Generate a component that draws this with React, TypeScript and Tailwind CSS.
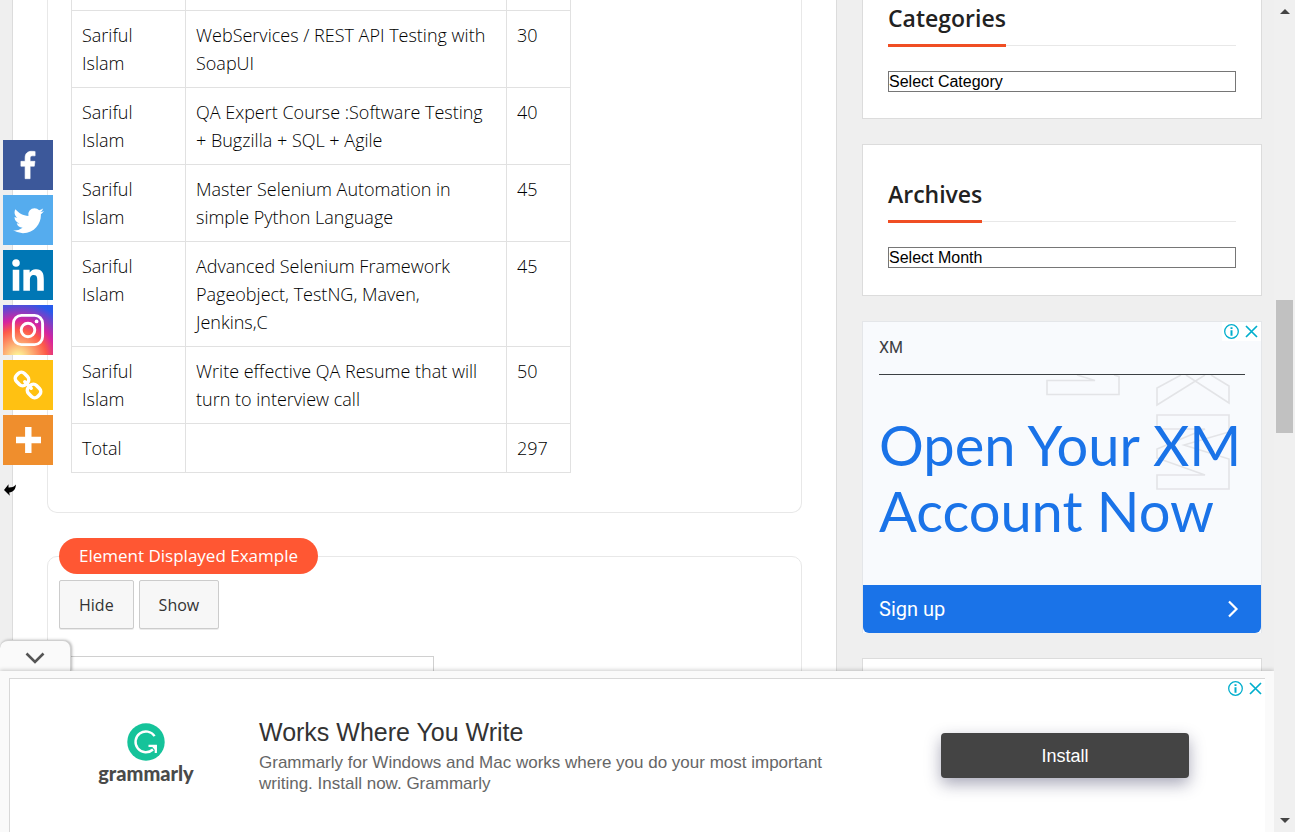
import type { ReactNode } from "react";

const courses = [
  { author: "Sariful Islam", title: "WebServices / REST API Testing with SoapUI", price: "30" },
  { author: "Sariful Islam", title: "QA Expert Course :Software Testing + Bugzilla + SQL + Agile", price: "40" },
  { author: "Sariful Islam", title: "Master Selenium Automation in simple Python Language", price: "45" },
  { author: "Sariful Islam", title: "Advanced Selenium Framework Pageobject, TestNG, Maven, Jenkins,C", price: "45" },
  { author: "Sariful Islam", title: "Write effective QA Resume that will turn to interview call", price: "50" },
  { author: "Total", title: "", price: "297" },
];

const cell = "border-r border-b border-[#e1e1e1] px-[10px] py-[10px] align-top";

function CourseTable() {
  return (
    <table className="w-[500px] table-fixed border-separate border-spacing-0 border-l border-[#e1e1e1] text-lg leading-7 font-light text-black">
      <colgroup>
        <col className="w-[114px]" />
        <col className="w-[321px]" />
        <col />
      </colgroup>
      <tbody>
        <tr className="h-[11px]">
          <td className="border-r border-b border-[#e1e1e1]" />
          <td className="border-r border-b border-[#e1e1e1]" />
          <td className="border-r border-b border-[#e1e1e1]" />
        </tr>
        {courses.map((c) => (
          <tr key={c.title}>
            <td className={cell}>{c.author}</td>
            <td className={cell}>{c.title}</td>
            <td className={cell}>{c.price}</td>
          </tr>
        ))}
      </tbody>
    </table>
  );
}

function ShareLink({ label, color, children }: { label: string; color: string; children: ReactNode }) {
  return (
    <a href="#" aria-label={label} className={`block size-[50px] ${color}`}>
      {children}
    </a>
  );
}

function ShareBar() {
  return (
    <nav aria-label="Share" className="absolute top-[140px] left-[3px] flex flex-col gap-[5px]">
      <ShareLink label="Facebook" color="bg-[#3c589a]">
        <svg viewBox="-5 -5 42 42" className="size-full" fill="#fff" stroke="#fff" strokeWidth="0.5">
          <path d="M17.78 27.5V17.008h3.522l.527-4.09h-4.05v-2.61c0-1.182.33-1.99 2.023-1.99h2.166V4.66c-.375-.05-1.66-.16-3.155-.16-3.123 0-5.26 1.905-5.26 5.405v3.016h-3.53v4.09h3.53V27.5h4.223z" />
        </svg>
      </ShareLink>
      <ShareLink label="Twitter" color="bg-[#55acee]">
        <svg viewBox="-4 -4 39 39" className="size-full" fill="#fff">
          <path d="M28 8.557a9.913 9.913 0 0 1-2.828.775 4.93 4.93 0 0 0 2.166-2.725 9.738 9.738 0 0 1-3.13 1.194 4.92 4.92 0 0 0-3.593-1.55 4.924 4.924 0 0 0-4.794 6.049c-4.09-.21-7.72-2.17-10.15-5.15a4.942 4.942 0 0 0-.665 2.477c0 1.71.87 3.214 2.19 4.1a4.968 4.968 0 0 1-2.23-.616v.06c0 2.39 1.7 4.38 3.952 4.83-.414.115-.85.174-1.297.174-.318 0-.626-.03-.928-.086a4.935 4.935 0 0 0 4.6 3.42 9.893 9.893 0 0 1-6.114 2.107c-.398 0-.79-.023-1.175-.068a13.953 13.953 0 0 0 7.55 2.213c9.056 0 14.01-7.507 14.01-14.013 0-.213-.005-.426-.015-.637.96-.695 1.795-1.56 2.455-2.55z" />
        </svg>
      </ShareLink>
      <ShareLink label="LinkedIn" color="bg-[#0077b5]">
        <svg viewBox="0 0 32 32" className="size-full" fill="#fff">
          <path d="M6.227 12.61h4.19v13.48h-4.19V12.61zm2.095-6.7a2.43 2.43 0 0 1 0 4.86c-1.344 0-2.428-1.09-2.428-2.43s1.084-2.43 2.428-2.43m4.72 6.7h4.02v1.84h.058c.56-1.058 1.927-2.176 3.965-2.176 4.238 0 5.02 2.792 5.02 6.42v7.395h-4.183v-6.56c0-1.564-.03-3.574-2.178-3.574-2.18 0-2.514 1.7-2.514 3.46v6.668h-4.187V12.61z" />
        </svg>
      </ShareLink>
      <ShareLink
        label="Instagram"
        color="bg-[radial-gradient(circle_at_30%_107%,#fdf497_0%,#fdf497_5%,#fd5949_45%,#d6249f_60%,#285aeb_90%)]"
      >
        <svg viewBox="0 0 50 50" className="size-full" fill="none" stroke="#fff" strokeWidth="2.9">
          <rect x="10.4" y="10.4" width="29.2" height="29.2" rx="8" />
          <circle cx="25" cy="25" r="6.8" />
          <circle cx="33.6" cy="16.4" r="1.9" fill="#fff" stroke="none" />
        </svg>
      </ShareLink>
      <ShareLink label="Copy link" color="bg-[#ffc112]">
        <svg viewBox="0 0 50 50" className="size-full" fill="none" stroke="#fff" strokeWidth="3.5" strokeLinecap="round">
          <g transform="rotate(45 25 25)">
            <rect x="10" y="19.4" width="13" height="11.2" rx="4.4" />
            <rect x="27" y="19.4" width="13" height="11.2" rx="4.4" />
            <path d="M20.5 25h9" />
          </g>
        </svg>
      </ShareLink>
      <ShareLink label="More" color="bg-[#ef8e2d]">
        <svg viewBox="0 0 50 50" className="size-full" stroke="#fff" strokeWidth="6.4">
          <path d="M25.3 12v26M13 25h25" />
        </svg>
      </ShareLink>
      <button aria-label="Hide share bar" className="mt-[13px] size-[14px]">
        <svg viewBox="0 0 14 14" className="size-full">
          <path d="M1 7 5.5 1.3v3.2C8.5 4.6 11 4 12.8 1.5c.3 4.5-2.6 7.6-6.6 8l.6 3.2z" fill="#000" />
        </svg>
      </button>
    </nav>
  );
}

function WidgetHeading({ children }: { children: ReactNode }) {
  return (
    <h2 className="mb-6 flex items-end">
      <span className="border-b-[3px] border-[#f04e23] pb-[11px] text-[23px] leading-[30px] font-semibold text-[#222]">
        {children}
      </span>
      <span className="mb-px h-px flex-1 bg-[#e8e8e8]" />
    </h2>
  );
}

const dropdown =
  "block h-[21px] w-full appearance-none border border-[#767676] bg-white font-['Liberation_Sans',sans-serif] text-base leading-[19px] text-black";

function AdMarks() {
  return (
    <span className="flex items-center gap-[5px]">
      <a href="#" aria-label="About this ad">
        <svg viewBox="0 0 15 15" className="size-[15px]" fill="none" stroke="#00aecd">
          <circle cx="7.5" cy="7.5" r="6.8" strokeWidth="1.3" />
          <path d="M7.5 3.2v1.8M7.5 6.2v5.6" strokeWidth="2" />
        </svg>
      </a>
      <button aria-label="Close ad">
        <svg viewBox="0 0 15 15" className="block size-[15px]" fill="none" stroke="#00aecd" strokeWidth="1.7">
          <path d="m2 2 11 11M13 2 2 13" />
        </svg>
      </button>
    </span>
  );
}

function XmAd() {
  return (
    <section className="relative border border-b-0 border-[#e4e6e9] bg-[#f8fafd] font-[Roboto,sans-serif]">
      <svg
        viewBox="0 0 200 116"
        className="absolute top-[53px] right-[31px] h-[116px] w-[200px]"
        fill="none"
        stroke="#e3e4e7"
        strokeWidth="1.6"
      >
        <path d="M47 0l18 5.5H17v14h72V1.5L84 0" />
        <path d="M151 0l-24 13v17l48-30M181 0l18 11v17L156 0" />
        <path d="M127 40h72v17l-45 13 45 14v30h-72v-14h48l-48-17v-9l48-20h-48z" />
      </svg>
      <div className="absolute top-0 right-0 bg-white px-[2px] py-[2px]">
        <AdMarks />
      </div>
      <div className="relative px-4">
        <p className="border-b border-[#3c4043] pt-[14px] pb-[14px] text-base leading-6 text-[#3c4043]">XM</p>
        <p className="pt-[37px] pb-[41px] font-[Lato,sans-serif] text-[56px] leading-[66px] text-[#1a73e8]">
          Open Your XM Account Now
        </p>
      </div>
      <a href="#" className="flex h-12 items-center justify-between rounded-b-[6px] bg-[#1a73e8] px-4 text-xl text-white">
        Sign up
        <svg viewBox="0 0 24 24" className="size-6" fill="none" stroke="#fff" strokeWidth="2.2">
          <path d="m8 4.5 7.5 7.5L8 19.5" />
        </svg>
      </a>
    </section>
  );
}

function Sidebar() {
  return (
    <aside className="flex w-[400px] shrink-0 flex-col gap-[25px]">
      <section className="border border-t-0 border-[#dcdcdc] bg-white px-[25px] pt-[3px] pb-[26px]">
        <WidgetHeading>Categories</WidgetHeading>
        <select aria-label="Categories" className={dropdown}>
          <option>Select Category</option>
        </select>
      </section>
      <section className="border border-[#dcdcdc] bg-white px-[25px] pt-[34px] pb-[27px]">
        <WidgetHeading>Archives</WidgetHeading>
        <select aria-label="Archives" className={dropdown}>
          <option>Select Month</option>
        </select>
      </section>
      <XmAd />
      <section className="h-[200px] border border-[#dcdcdc] bg-white" />
    </aside>
  );
}

function BottomAd() {
  return (
    <div className="absolute inset-x-0 bottom-0 font-['Liberation_Sans',sans-serif]">
      <button
        aria-label="Collapse ad"
        className="relative flex h-[31px] w-[71px] items-center justify-center rounded-t-[8px] border-t border-r border-[#d0d0d0] bg-[#fafafa] shadow-[1px_0_3px_rgba(0,0,0,0.3)]"
      >
        <svg viewBox="0 0 20 12" className="mt-1 h-3 w-5" fill="none" stroke="#555" strokeWidth="2.6">
          <path d="m1.5 1.5 8.5 8.5 8.5-8.5" />
        </svg>
      </button>
      <div className="relative bg-[#fafafa] pt-[7px] pr-[9px] pl-[9px] shadow-[0_-1px_4px_rgba(0,0,0,0.2)]">
        <section className="relative flex h-[154px] items-center border-t border-l border-[#d8d8d8] bg-white">
          <div className="absolute top-[2px] right-[2px]">
            <AdMarks />
          </div>
          <a href="#" aria-label="Grammarly" className="ml-[86px] flex w-[100px] flex-col items-center pb-1">
            <svg viewBox="0 0 38 38" className="size-[38px]">
              <circle cx="19" cy="19" r="18.7" fill="#15c39a" />
              <path d="M27.6 13.2A10.4 10.4 0 1 0 26 26.5" fill="none" stroke="#fff" strokeWidth="2.4" />
              <path d="M21.5 22.9h7.3v7" fill="none" stroke="#fff" strokeWidth="2.2" />
              <path d="M23.5 22h6.3v7z" fill="#fff" />
            </svg>
            <span className="font-[Lato,sans-serif] text-[20px] leading-[24px] font-black text-[#4a4a4a]">grammarly</span>
          </a>
          <div className="ml-[63px] w-[600px]">
            <h3 className="text-[25px] leading-[30px] text-[#333]">Works Where You Write</h3>
            <p className="mt-[5px] text-[17px] leading-[21px] text-[#666]">
              Grammarly for Windows and Mac works where you do your most important writing. Install now. Grammarly
            </p>
          </div>
          <button className="mr-[76px] ml-auto h-[45px] w-[248px] rounded-[4px] bg-[#444] text-lg text-white shadow-[0_6px_16px_rgba(40,40,80,0.4)]">
            Install
          </button>
        </section>
      </div>
    </div>
  );
}

function ScrollTrack() {
  return (
    <div aria-hidden="true" className="flex w-[21px] shrink-0 flex-col items-center bg-[#f0f0f0] py-2">
      <svg viewBox="0 0 10 6" className="h-[6px] w-[10px]">
        <path d="M0 6 5 1l5 5z" fill="#444" />
      </svg>
      <div className="mt-[286px] h-[133px] w-[17px] bg-[#c1c1c1]" />
      <svg viewBox="0 0 10 6" className="mt-auto h-[6px] w-[10px]">
        <path d="M0 0 5 5l5-5z" fill="#444" />
      </svg>
    </div>
  );
}

const demoButton =
  "h-[49px] rounded-[2px] border border-[#ccc] bg-[#f7f7f7] px-[19px] text-base text-[#333] shadow-[0_1px_0_rgba(0,0,0,0.08)]";

export default function App() {
  return (
    <div className="flex h-screen overflow-hidden bg-[#efefef] font-['Open_Sans',sans-serif]">
      <div className="relative flex min-w-0 flex-1 items-start gap-[25px] overflow-hidden px-3">
        <main className="min-h-screen min-w-0 flex-1 border-x border-[#dcdcdc] bg-white px-[34px]">
          <section className="rounded-b-[10px] border border-t-0 border-[#e8e8e8] px-[23px] pb-[39px]">
            <CourseTable />
          </section>
          <fieldset className="mt-[25px] h-[400px] rounded-[10px] border border-[#e8e8e8] px-[11px]">
            <legend className="rounded-[18px] bg-[#ff5733] px-5 text-[17px] leading-9 text-white">
              Element Displayed Example
            </legend>
            <div className="mt-[6px] flex gap-[5px]">
              <button className={demoButton}>Hide</button>
              <button className={demoButton}>Show</button>
            </div>
            <input aria-label="Displayed text" className="mt-[27px] h-12 w-[375px] border border-[#d0d0d0]" />
          </fieldset>
        </main>
        <Sidebar />
        <ShareBar />
        <BottomAd />
      </div>
      <ScrollTrack />
    </div>
  );
}
